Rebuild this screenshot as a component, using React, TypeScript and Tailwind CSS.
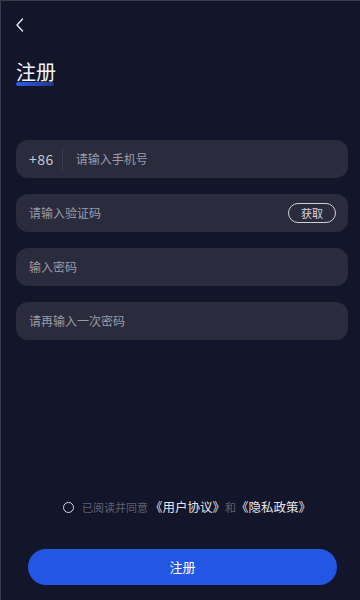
import React from "react";

const font = { fontFamily: '"Noto Sans CJK SC", "Noto Sans", sans-serif' };

export default function App() {
  return (
    <div
      className="w-[360px] h-[600px] bg-[#13152a] border-t border-l border-[#3a3c4c] flex flex-col relative overflow-hidden"
      style={font}
    >
      <div className="h-[16px]" />
      <div className="pl-[13px] h-[16px] flex items-center">
        <svg width="12" height="16" viewBox="0 0 12 16" fill="none">
          <path d="M8.5 2 L3 8 L8.5 14" stroke="#e6e7ee" strokeWidth="1.4" strokeLinecap="round" strokeLinejoin="round" />
        </svg>
      </div>
      <div className="ml-[15px] mt-[27px] relative w-fit">
        <div className="absolute left-0 top-[22px] w-[38px] h-[4px] rounded-full bg-gradient-to-r from-[#2b5de8] to-[#1f3a8a]" />
        <div className="relative text-[20px] leading-[24px] text-[#f2f3f7] font-normal">注册</div>
      </div>

      <div className="ml-[15px] mr-[12px] mt-[56px] flex flex-col gap-[16px]">
        <div className="h-[38px] rounded-[12px] bg-[#2a2b3d] flex items-center pl-[13px]">
          <span className="text-[14px] text-[#c9cad3] tracking-[0.5px]">+86</span>
          <span className="w-px h-[22px] bg-[#3c3d50] ml-[8px] mr-[13px]" />
          <span className="text-[12px] text-[#9a9ba7]">请输入手机号</span>
        </div>
        <div className="h-[38px] rounded-[12px] bg-[#2a2b3d] flex items-center pl-[13px] pr-[12px]">
          <span className="text-[12px] text-[#9a9ba7] flex-1">请输入验证码</span>
          <span className="w-[48px] h-[20px] rounded-full border border-[#d0d1d8] flex items-center justify-center text-[11px] text-[#d6d7de]">
            获取
          </span>
        </div>
        <div className="h-[38px] rounded-[12px] bg-[#2a2b3d] flex items-center pl-[13px]">
          <span className="text-[12px] text-[#9a9ba7]">输入密码</span>
        </div>
        <div className="h-[38px] rounded-[12px] bg-[#2a2b3d] flex items-center pl-[13px]">
          <span className="text-[12px] text-[#9a9ba7]">请再输入一次密码</span>
        </div>
      </div>

      <div className="flex-1" />

      <div className="flex items-center pl-[62px]">
        <span className="w-[11px] h-[11px] rounded-full border-[1.5px] border-[#d4d5dc] mr-[8px]" />
        <span className="text-[11px] text-[#5f6170]">已阅读并同意</span>
        <span className="text-[12.5px] text-[#e4e5ec] ml-[2px]">《用户协议》</span>
        <span className="text-[11px] text-[#5f6170]">和</span>
        <span className="text-[12.5px] text-[#e4e5ec]">《隐私政策》</span>
      </div>

      <div className="ml-[27px] mr-[23px] mt-[32px] mb-[15px] h-[36px] rounded-full bg-[#2456e4] flex items-center justify-center text-[13px] text-white">
        注册
      </div>
    </div>
  );
}
